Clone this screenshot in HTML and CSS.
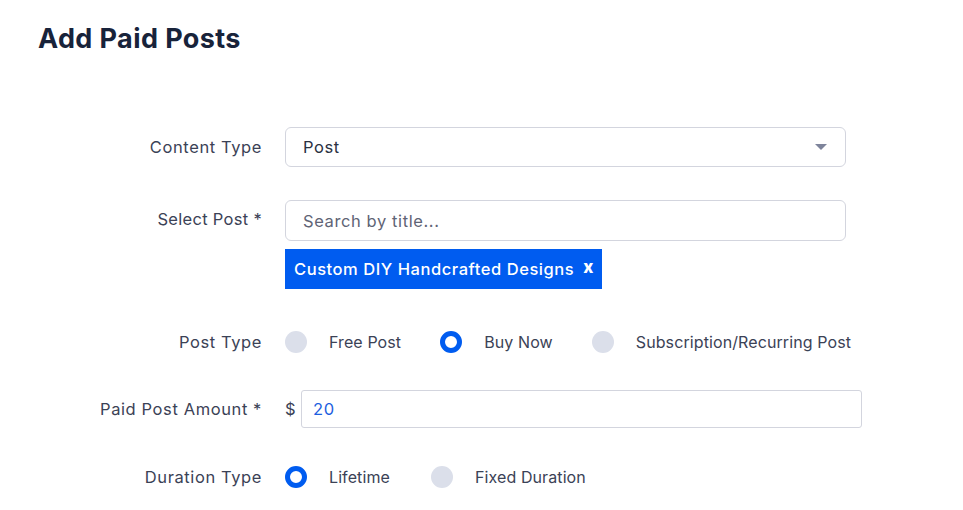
FILE: index.html
```html
<!DOCTYPE html>
<html>
<head>
<meta charset="utf-8">
<link rel="stylesheet" href="styles.css">
</head>
<body>
<div class="page">
  <h1 class="title">Add Paid Posts</h1>
  <div class="form">
    <div class="row row-content">
      <div class="label">Content Type</div>
      <div class="field">
        <div class="select">
          <span>Post</span>
          <span class="caret"></span>
        </div>
      </div>
    </div>
    <div class="row row-select">
      <div class="label">Select Post *</div>
      <div class="field">
        <div class="input placeholder">Search by title...</div>
        <div class="tag"><span>Custom DIY Handcrafted Designs</span><span class="tag-x">x</span></div>
      </div>
    </div>
    <div class="row row-posttype">
      <div class="label">Post Type</div>
      <div class="field radios">
        <div class="radio-item r-free"><span class="radio"></span><span class="rtext">Free Post</span></div>
        <div class="radio-item r-buy"><span class="radio checked"></span><span class="rtext">Buy Now</span></div>
        <div class="radio-item"><span class="radio"></span><span class="rtext">Subscription/Recurring Post</span></div>
      </div>
    </div>
    <div class="row row-amount">
      <div class="label">Paid Post Amount *</div>
      <div class="field amount">
        <span class="dollar">$</span>
        <div class="input value">20</div>
      </div>
    </div>
    <div class="row row-duration">
      <div class="label">Duration Type</div>
      <div class="field radios">
        <div class="radio-item r-life"><span class="radio checked"></span><span class="rtext">Lifetime</span></div>
        <div class="radio-item"><span class="radio"></span><span class="rtext">Fixed Duration</span></div>
      </div>
    </div>
  </div>
</div>
</body>
</html>
```
FILE: styles.css
```css
* { box-sizing: border-box; }
html, body { margin: 0; padding: 0; background: #ffffff; }
body {
  font-family: "Inter", "Open Sans", sans-serif;
  color: #3b4256;
  font-size: 16.5px;
  letter-spacing: 0.6px;
  white-space: nowrap;
}
.page { padding: 21px 0 0 0; }
.title {
  margin: 0 0 0 38px;
  font-size: 27px;
  font-weight: 700;
  color: #18233a;
  line-height: 36px;
  letter-spacing: 0.4px;
}
.form { margin-top: 70px; }
.row {
  display: grid;
  grid-template-columns: 262px 1fr;
  column-gap: 23px;
}
.label {
  text-align: right;
  line-height: 40px;
  color: #3b4256;
}
.row-select .label { letter-spacing: 0.3px; }
.field { width: 561px; }
.select, .input {
  height: 40px;
  border: 1px solid #d3d5de;
  border-radius: 6px;
  display: flex;
  align-items: center;
  padding: 0 17px;
}
.select { justify-content: space-between; color: #2a3142; padding-right: 18px; }
.caret {
  width: 0; height: 0;
  border-left: 6px solid transparent;
  border-right: 6px solid transparent;
  border-top: 6px solid #7e849b;
}
.row-select { margin-top: 33px; }
.row-select .label { line-height: 41px; margin-top: -1px; }
.row-select .input { height: 41px; }
.placeholder { color: #5f6475; }
.tag {
  margin-top: 8px;
  display: inline-flex;
  align-items: center;
  height: 40px;
  background: #005cf0;
  color: #ffffff;
  padding: 0 8px 0 9px;
  font-weight: 500;
  letter-spacing: 0.55px;
}
.tag-x { margin-left: 9px; font-weight: 800; font-size: 17px; line-height: 1; margin-top: -4px; }
.row-posttype { margin-top: 31px; }
.row-posttype .label, .row-duration .label { line-height: 44px; }
.radios { display: flex; align-items: center; height: 44px; }
.radio-item { display: flex; align-items: center; }
.radio {
  width: 22px; height: 22px;
  border-radius: 50%;
  background: #dbdfea;
  flex: none;
}
.radio.checked {
  background: #ffffff;
  border: 5px solid #005cf0;
}
.rtext { margin-left: 22px; color: #3b4256; font-size: 16px; letter-spacing: 0.1px; }
.r-free { margin-right: 39px; }
.r-buy { margin-right: 39px; }
.r-life { margin-right: 41px; }
.row-amount { margin-top: 26px; }
.row-amount .label { line-height: 38px; }
.amount { display: flex; align-items: center; width: 577px; }
.dollar { width: 16px; color: #3b4256; }
.amount .input { flex: 1; height: 38px; border-radius: 3px; padding: 0 11px; color: #1e5fe0; }
.row-duration { margin-top: 27px; }
```
